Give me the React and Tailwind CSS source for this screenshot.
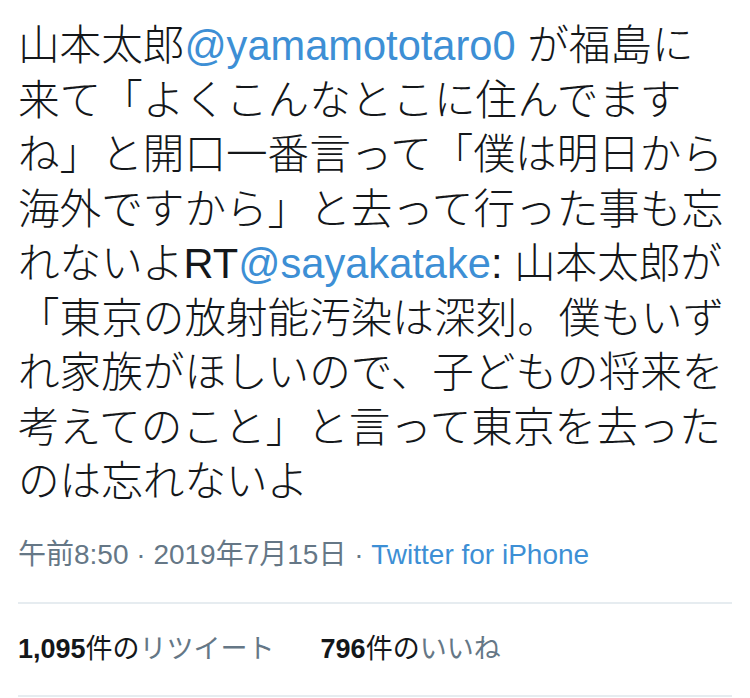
// App.jsx

const lines = [
  [["山本太郎"], ["@yamamototaro0", true], [" が福島に"]],
  [["来て「よくこんなとこに住んでます"]],
  [["ね」と開口一番言って「僕は明日から"]],
  [["海外ですから」と去って行った事も忘"]],
  [["れないよRT"], ["@sayakatake", true], [": 山本太郎が"]],
  [["「東京の放射能汚染は深刻。僕もいず"]],
  [["れ家族がほしいので、子どもの将来を"]],
  [["考えてのこと」と言って東京を去った"]],
  [["のは忘れないよ"]],
];

export default function App() {
  return (
    <div
      className="w-[750px] h-[698px] bg-white overflow-hidden"
      style={{ fontFamily: '"Liberation Sans", "Noto Sans CJK JP", sans-serif' }}
    >
      <div className="px-[18px] pt-[19px]">
        {/* tweet body */}
        <div className="text-[41.6px] leading-[54.5px] font-light text-[#14171a]">
          {lines.map((line, i) => (
            <div key={i} className="whitespace-nowrap">
              {line.map(([text, link], j) =>
                link ? (
                  <span key={j} className="text-[#3d8fd5]">{text}</span>
                ) : (
                  <span key={j}>{text}</span>
                )
              )}
            </div>
          ))}
        </div>

        {/* time / source */}
        <div className="mt-[28px] text-[28px] leading-[34px] text-[#657786] whitespace-nowrap">
          午前8:50 · 2019年7月15日 · <span className="text-[#3d8fd5]">Twitter for iPhone</span>
        </div>

        {/* stats */}
        <div className="mt-[30px] border-t-2 border-b-2 border-[#e6ecf0] h-[95px] flex items-center gap-[46px] text-[27px] text-[#657786]">
          <div>
            <span className="font-bold text-[#14171a]">1,095</span>
            <span className="text-[#14171a]">件の</span>リツイート
          </div>
          <div>
            <span className="font-bold text-[#14171a]">796</span>
            <span className="text-[#14171a]">件の</span>いいね
          </div>
        </div>
      </div>
    </div>
  );
}
